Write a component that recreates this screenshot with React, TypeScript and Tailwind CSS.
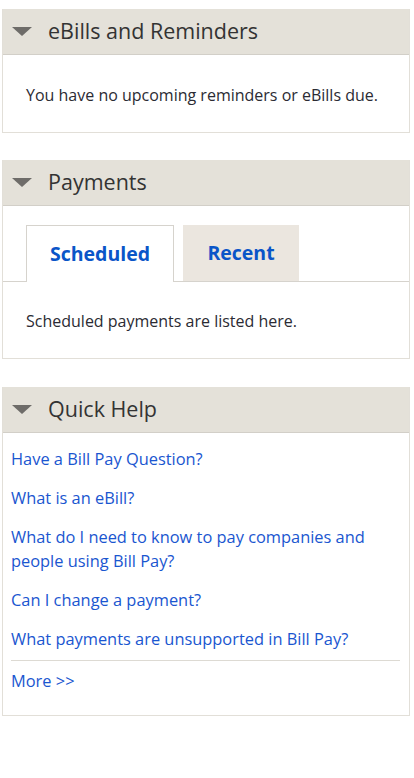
import React from "react";

function Tri() {
  return (
    <svg width="20" height="9" viewBox="0 0 20 9" className="shrink-0">
      <polygon points="0,0 20,0 10,9" fill="#6e6c69" />
    </svg>
  );
}

function Header({ title }: { title: string }) {
  return (
    <div className="h-[46px] bg-[#e4e1d9] border-b border-[#d2cfc8] flex items-center pl-[9px] gap-[16px]">
      <Tri />
      <span className="text-[21.5px] text-[#333333] leading-none -mt-[2px]">{title}</span>
    </div>
  );
}

const links = [
  "Have a Bill Pay Question?",
  "What is an eBill?",
  "What do I need to know to pay companies and people using Bill Pay?",
  "Can I change a payment?",
  "What payments are unsupported in Bill Pay?",
];

export default function App() {
  return (
    <div className="w-[414px] min-h-[778px] bg-white pt-[9px] font-['Open_Sans',sans-serif]">
      <div className="ml-[2px] w-[408px] flex flex-col">
        <section className="border border-[#e2dfd8] border-t-0">
          <Header title="eBills and Reminders" />
          <div className="h-[77px] flex items-center pl-[23px] pt-[3px] text-[16px] text-[#2b2b33]">
            You have no upcoming reminders or eBills due.
          </div>
        </section>

        <section className="mt-[27px] border border-[#e2dfd8] border-t-0">
          <Header title="Payments" />
          <div className="pt-[19px] flex border-b border-[#d6d3cd]">
            <div className="ml-[23px] w-[148px] h-[57px] border border-b-0 border-[#d6d3cd] bg-white -mb-px flex items-center justify-center text-[19.5px] font-bold text-[#0a55c8]">
              Scheduled
            </div>
            <div className="ml-[9px] w-[116px] h-[56px] bg-[#ebe6df] flex items-center justify-center text-[19.5px] font-bold text-[#0a55c8]">
              Recent
            </div>
          </div>
          <div className="h-[76px] flex items-center pl-[23px] pt-[2px] text-[16px] text-[#2b2b33]">
            Scheduled payments are listed here.
          </div>
        </section>

        <section className="mt-[28px] border border-[#e2dfd8] border-t-0">
          <Header title="Quick Help" />
          <div className="pl-[8px] pr-[9px] pt-[14px]">
            <ul className="flex flex-col gap-[15px]">
              {links.map((l) => (
                <li key={l} className="text-[16.4px] leading-[24px] text-[#1a56d0]">
                  {l}
                </li>
              ))}
            </ul>
            <div className="mt-[9px] border-t border-[#dddad3] pt-[8px] pb-[22px] text-[16.4px] leading-[24px] text-[#1a56d0]">
              More &gt;&gt;
            </div>
          </div>
        </section>
      </div>
    </div>
  );
}
